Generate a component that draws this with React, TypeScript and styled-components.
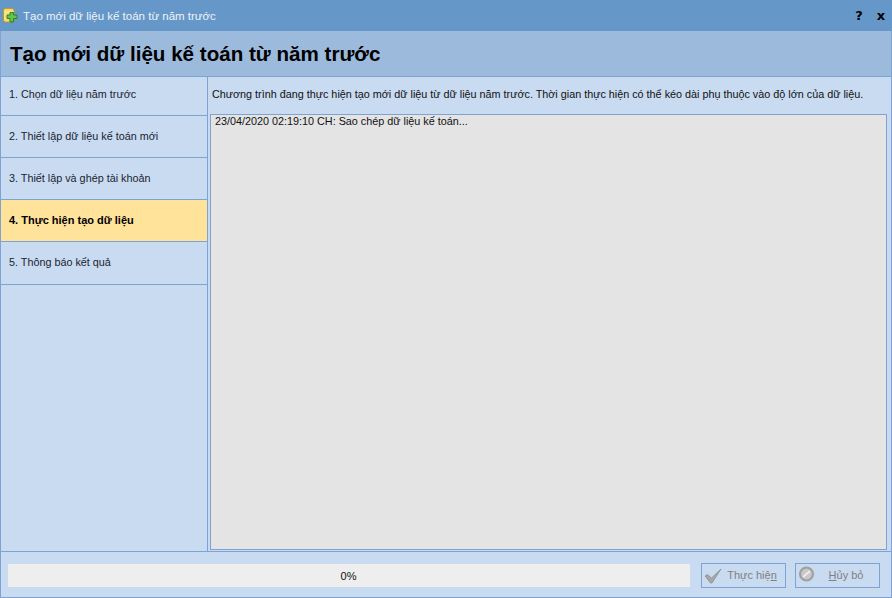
import React from 'react';
import styled, { createGlobalStyle } from 'styled-components';

const GlobalStyle = createGlobalStyle`
  html, body {
    margin: 0;
    padding: 0;
    height: 100%;
    overflow: hidden;
  }
  #root {
    height: 100%;
  }
`;

const Window = styled.div`
  width: 892px;
  height: 598px;
  display: flex;
  flex-direction: column;
  box-sizing: border-box;
  background-color: #6597c8;
  font-family: 'Liberation Sans', Arial, sans-serif;
  font-size: 10.8px;
  color: #111;
`;
const TitleBar = styled.div`
  height: 31px;
  flex-shrink: 0;
  display: flex;
  align-items: center;
  padding: 0 0 0 3px;
  color: #eef3f9;
  font-size: 11.5px;
`;
const AppIcon = styled.svg`
  width: 15px;
  height: 15px;
  margin: 0 5px 1px 0;
`;
const TitleText = styled.span`
  flex: 1;
`;
const TitleButton = styled.span`
  font-family: 'DejaVu Sans', sans-serif;
  font-weight: 700;
  font-size: 13px;
  color: #000;
  width: 22px;
  text-align: center;
`;
const Body = styled.div`
  flex: 1;
  display: flex;
  flex-direction: column;
  min-height: 0;
  border: 1px solid #7da3d4;
  border-top: none;
  background-color: #c9dbf1;
`;
const Header = styled.h1`
  height: 46px;
  flex-shrink: 0;
  margin: 0;
  padding: 0 0 0 9px;
  display: flex;
  align-items: center;
  box-sizing: border-box;
  background-color: #9cbbdc;
  border-bottom: 1px solid #7da3d4;
  font-size: 20.6px;
  font-weight: 700;
  color: #000;
`;
const Main = styled.div`
  flex: 1;
  display: flex;
  min-height: 0;
  border-bottom: 1px solid #7da3d4;
`;
const Steps = styled.nav`
  width: 206px;
  flex-shrink: 0;
  border-right: 1px solid #7da3d4;
`;
const Step = styled.div<{ $active?: boolean; $height: number; $lift: number }>`
  height: ${props => props.$height}px;
  box-sizing: border-box;
  display: flex;
  align-items: center;
  padding: 0 0 ${props => props.$lift}px 8px;
  border-bottom: 1px solid #7da3d4;
  background-color: ${props => (props.$active ? '#ffe39b' : 'transparent')};
  font-weight: ${props => (props.$active ? 700 : 400)};
  font-size: ${props => (props.$active ? '11px' : 'inherit')};
  color: ${props => (props.$active ? '#000' : '#1a2330')};
`;
const Content = styled.div`
  flex: 1;
  min-width: 0;
  display: flex;
  flex-direction: column;
  padding: 0 4px 1px 2px;
`;
const Description = styled.div`
  height: 37px;
  flex-shrink: 0;
  box-sizing: border-box;
  display: flex;
  align-items: center;
  padding: 0 0 4px 2px;
  white-space: nowrap;
`;
const LogBox = styled.div`
  flex: 1;
  box-sizing: border-box;
  background-color: #e4e4e4;
  border: 1px solid #7da3d4;
  padding: 0 0 0 4px;
  line-height: 13px;
`;
const Footer = styled.div`
  height: 45px;
  flex-shrink: 0;
  display: flex;
  align-items: center;
  box-sizing: border-box;
  padding: 1px 11px 0 7px;
`;
const Progress = styled.div`
  width: 682px;
  height: 23px;
  display: flex;
  align-items: center;
  justify-content: center;
  background-color: #eeeeee;
  margin-right: 11px;
  padding: 1px 1px 0 0;
  box-sizing: border-box;
  font-size: 11px;
`;
const FooterButton = styled.div<{ $gap?: number }>`
  width: 85px;
  height: 25px;
  box-sizing: border-box;
  display: flex;
  align-items: center;
  border: 1px solid #7da3d4;
  margin-right: ${props => props.$gap || 0}px;
  color: #808080;
  padding-left: 2px;
  font-size: 11px;
`;
const ButtonIcon = styled.svg`
  width: 20px;
  height: 20px;
  flex-shrink: 0;
`;
const ButtonLabel = styled.span`
  flex: 1;
  text-align: center;
  padding-right: 5px;
  u {
    text-underline-offset: 1px;
  }
`;

const steps = [
  { label: '1. Chọn dữ liệu năm trước', height: 39, lift: 4 },
  { label: '2. Thiết lập dữ liệu kế toán mới', height: 42, lift: 2 },
  { label: '3. Thiết lập và ghép tài khoản', height: 42, lift: 2 },
  { label: '4. Thực hiện tạo dữ liệu', height: 42, lift: 2, active: true },
  { label: '5. Thông báo kết quả', height: 43, lift: 2 }
];

export default function App() {
  return (
    <Window>
      <GlobalStyle />
      <TitleBar>
        <AppIcon viewBox="0 0 15 15">
          <rect x="0.5" y="0.5" width="10.5" height="13.5" rx="2" fill="#f8dc66" stroke="#c09a2c" />
          <path d="M1.5 4h9M1.5 7h4M1.5 10h3" stroke="#fdf0b0" strokeWidth="1" />
          <path d="M7 4.5h3.5v2.5H14v3.5h-3.5V14H7v-3.5H4V7h3z" fill="#63c64a" stroke="#2c8030" />
        </AppIcon>
        <TitleText>Tạo mới dữ liệu kế toán từ năm trước</TitleText>
        <TitleButton>?</TitleButton>
        <TitleButton>x</TitleButton>
      </TitleBar>
      <Body>
        <Header>Tạo mới dữ liệu kế toán từ năm trước</Header>
        <Main>
          <Steps>
            {steps.map(step => (
              <Step key={step.label} $active={step.active} $height={step.height} $lift={step.lift}>
                {step.label}
              </Step>
            ))}
          </Steps>
          <Content>
            <Description>
              Chương trình đang thực hiện tạo mới dữ liệu từ dữ liệu năm trước. Thời gian thực hiện có thể kéo dài phụ thuộc vào độ lớn của dữ liệu.
            </Description>
            <LogBox>23/04/2020 02:19:10 CH: Sao chép dữ liệu kế toán...</LogBox>
          </Content>
        </Main>
        <Footer>
          <Progress>0%</Progress>
          <FooterButton $gap={9}>
            <ButtonIcon viewBox="0 0 20 20">
              <path d="M1 11L3.5 9.5 7.5 13 17 4 8 18H6.5z" fill="#a6a6a6" stroke="#808080" strokeWidth="0.6" strokeLinejoin="round" />
            </ButtonIcon>
            <ButtonLabel>
              Thực hiệ<u>n</u>
            </ButtonLabel>
          </FooterButton>
          <FooterButton>
            <ButtonIcon viewBox="0 0 20 20">
              <circle cx="8.5" cy="9" r="6.5" fill="#c8c8c8" stroke="#a0a0a0" strokeWidth="2.2" />
              <path d="M5 12L12 6" stroke="#ececec" strokeWidth="2.2" />
            </ButtonIcon>
            <ButtonLabel>
              <u>H</u>ủy bỏ
            </ButtonLabel>
          </FooterButton>
        </Footer>
      </Body>
    </Window>
  );
}
